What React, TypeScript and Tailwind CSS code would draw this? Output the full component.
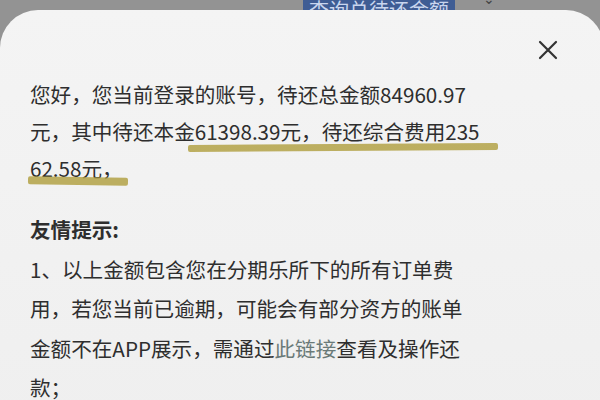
import React from "react";

const FONT = { fontFamily: '"Noto Sans CJK SC", "Noto Sans", sans-serif' };

function CloseIcon() {
  return (
    <svg width="20" height="20" viewBox="0 0 20 20" fill="none">
      <path d="M2 2 L18 18 M18 2 L2 18" stroke="#333" strokeWidth="2.2" strokeLinecap="round" />
    </svg>
  );
}

export default function App() {
  return (
    <div className="relative h-[400px] w-[600px] overflow-hidden bg-[#939393]" style={FONT}>
      {/* page behind the dialog */}
      <div className="flex h-[12px] items-end">
        <div className="ml-[303px] flex h-[40px] w-[152px] shrink-0 items-end justify-center overflow-hidden bg-[#3f5d94] text-[20px] leading-none text-[#c9d6ee]">
          <span className="translate-y-[8px]">查询总待还金额</span>
        </div>
        <span className="ml-[28px] mb-[7px] text-[14px] leading-none text-[#444]">⌄</span>
      </div>

      {/* dialog */}
      <div className="absolute left-0 top-[10px] h-[420px] w-[604px] rounded-t-[38px] bg-gradient-to-b from-[#f4f4f4] to-[#efefef] text-[20.6px] text-[#2e2e2e]">
        <div className="flex h-[66px] justify-end pr-[46px] pt-[30px]">
          <CloseIcon />
        </div>

        <div className="relative pl-[30px] leading-[37px] whitespace-nowrap">
          <div>您好，您当前登录的账号，待还总金额84960.97</div>
          <div>元，其中待还本金61398.39元，待还综合费用235</div>
          <div>62.58元，</div>
          <div className="absolute left-[188px] top-[68px] h-[7px] w-[310px] -rotate-[0.4deg] rounded-[2px] bg-[#b3a247]/85" />
          <div className="absolute left-[28px] top-[101px] h-[8px] w-[100px] rotate-[1deg] rounded-[2px] bg-[#b3a247]/85" />
        </div>

        <div className="mt-[23px] pl-[30px] leading-[39.5px] whitespace-nowrap">
          <div className="font-bold">友情提示:</div>
          <div>1、以上金额包含您在分期乐所下的所有订单费</div>
          <div>用，若您当前已逾期，可能会有部分资方的账单</div>
          <div>
            金额不在APP展示，需通过<span className="text-[#6a7a78]">此链接</span>查看及操作还
          </div>
          <div>款；</div>
        </div>
      </div>
    </div>
  );
}
